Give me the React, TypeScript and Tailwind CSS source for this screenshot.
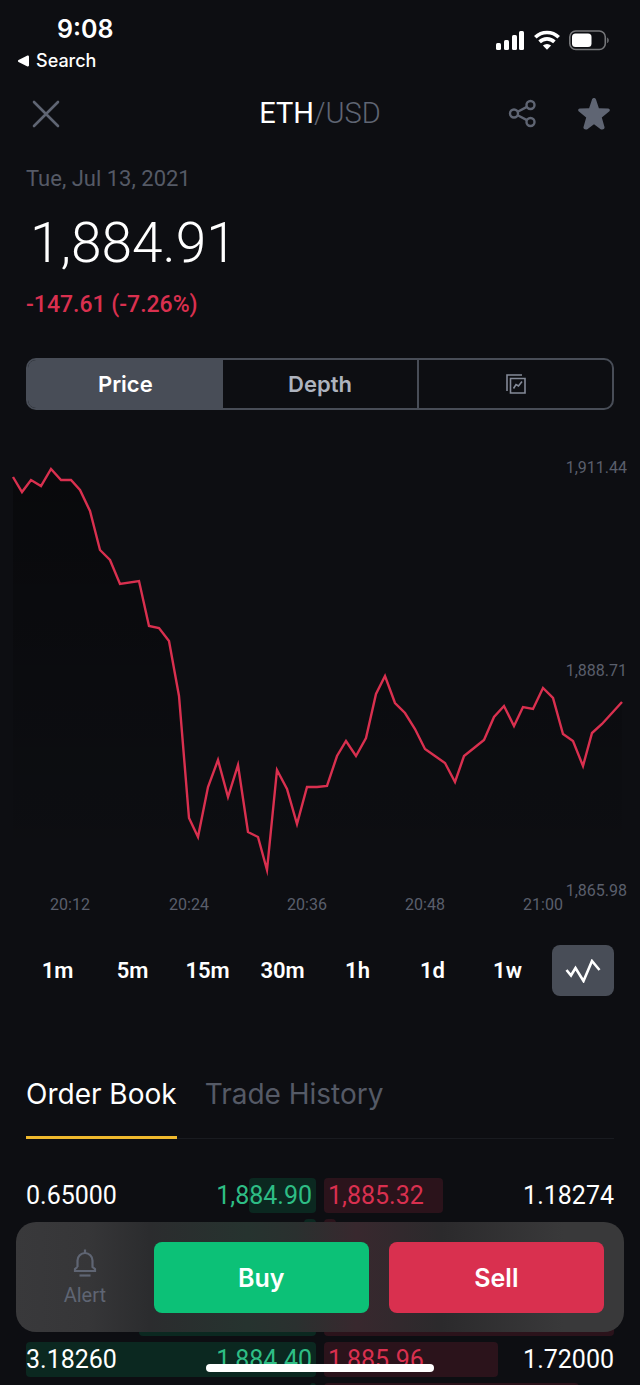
import { clsx } from 'clsx'

const ranges = ['1m', '5m', '15m', '30m', '1h', '1d', '1w']

const times = [
  { x: 70, label: '20:12' },
  { x: 189, label: '20:24' },
  { x: 307, label: '20:36' },
  { x: 425, label: '20:48' },
  { x: 543, label: '21:00' },
]

const prices = [
  { y: 27, label: '1,911.44' },
  { y: 230, label: '1,888.71' },
  { y: 450, label: '1,865.98' },
]

const line =
  '13,37 22,52 31,40 41,46 51,29 61,40 71,40 80,50 90,71 100,110 110,120 120,144 139,141 149,186 159,188 169,201 179,256 189,378 198,397 208,347 218,320 228,357 238,325 248,392 258,397 267,430 277,330 287,349 297,384 307,347 317,347 327,346 337,316 346,301 356,316 366,298 376,254 385,236 395,263 405,273 415,289 425,309 435,316 445,323 455,342 464,316 474,308 484,300 494,277 504,266 514,286 523,267 533,269 543,248 553,258 563,294 573,301 583,326 592,293 602,284 612,273 622,262'

type Row = { bid?: string; bidSize?: string; ask?: string; askSize?: string; bidDepth: number; askDepth: number }

// depth is a percentage of each side of the book
const rows: Row[] = [
  { bidSize: '0.65000', bid: '1,884.90', ask: '1,885.32', askSize: '1.18274', bidDepth: 23, askDepth: 41 },
  { bidDepth: 4, askDepth: 4 },
  { bidDepth: 28, askDepth: 30 },
  { bidDepth: 61, askDepth: 100 },
  { bidSize: '3.18260', bid: '1,884.40', ask: '1,885.96', askSize: '1.72000', bidDepth: 100, askDepth: 60 },
  { bidDepth: 2, askDepth: 88 },
]

function StatusBar() {
  return (
    <div className="flex justify-between pr-[30px] pl-4 font-['Inter',sans-serif] text-white">
      <div className="pt-3">
        <div className="pl-[41px] text-[25px] leading-[34px] font-semibold">9:08</div>
        <a href="#" className="flex items-center gap-1 text-lg leading-[30px] font-medium">
          <svg className="h-3 w-4" viewBox="0 0 16 12" fill="currentColor">
            <path d="M2.5 5.1 11 .7c1-.5 2 0 2 1v8.6c0 1-1 1.5-2 1L2.5 6.9c-.8-.5-.8-1.3 0-1.8Z" />
          </svg>
          Search
        </a>
      </div>
      <div className="flex items-center gap-2 pt-1">
        <svg className="h-5 w-[30px]" viewBox="0 0 30 20" fill="currentColor">
          <rect x="0" y="13" width="5" height="7" rx="1.5" />
          <rect x="8" y="10" width="5" height="10" rx="1.5" />
          <rect x="16" y="5" width="5" height="15" rx="1.5" />
          <rect x="23" y="1" width="5" height="19" rx="1.5" />
        </svg>
        <svg className="h-5 w-[26px]" viewBox="0 0 26 20" fill="none" stroke="currentColor" strokeWidth="3.6">
          <path d="M1.3 7.3a16.6 16.6 0 0 1 23.4 0" />
          <path d="M5.6 11.9a10.5 10.5 0 0 1 14.8 0" />
          <path d="M13 19.8 8.9 15.6a5.9 5.9 0 0 1 8.2 0Z" fill="currentColor" stroke="none" />
        </svg>
        <svg className="h-6 w-[42px]" viewBox="0 0 42 24">
          <rect x="1.8" y="3" width="35.5" height="18.5" rx="6" fill="none" stroke="#76777a" strokeWidth="1.6" />
          <rect x="4" y="5.5" width="19.5" height="13.5" rx="3.5" fill="#fff" />
          <path d="M39.2 9.5c2 .9 2 4.7 0 5.6Z" fill="#76777a" />
        </svg>
      </div>
    </div>
  )
}

function Header() {
  return (
    <header className="grid h-[75px] grid-cols-[1fr_auto_1fr] items-center px-[26px] text-[#5f6573]">
      <button aria-label="Close" className="justify-self-start p-1.5">
        <svg className="size-7" viewBox="0 0 28 28" fill="none" stroke="currentColor" strokeWidth="2.6" strokeLinecap="round">
          <path d="M2 2 26 26M26 2 2 26" />
        </svg>
      </button>
      <h1 className="text-[29px] font-light">
        <span className="font-normal text-white">ETH</span>/USD
      </h1>
      <div className="flex items-center gap-9 justify-self-end">
        <button aria-label="Share">
          <svg className="size-[30px]" viewBox="0 0 30 30" fill="none" stroke="currentColor" strokeWidth="2.4">
            <circle cx="6" cy="14.5" r="4" />
            <circle cx="22.5" cy="6" r="4" />
            <circle cx="22.5" cy="23" r="4" />
            <path d="m9.7 12.7 9.2-4.8M9.7 16.3l9.2 4.8" />
          </svg>
        </button>
        <button aria-label="Favourite" className="w-10">
          <svg className="mx-auto size-8" viewBox="0 0 32 32" fill="currentColor">
            <path d="M14 1.5c.5-2 3.500-2 4 0l2.900 8.700 9.300.3c1.600.1 2.200 2 .9 3l-7.300 5.900 2.700 9.600c.4 1.500-.8 2.500-2.300 2.500h-1.200L16 26.300 9 31.500H7.800c-1.500 0-2.700-1-2.300-2.500l2.700-9.600L.9 13.500c-1.300-1-.7-2.900.9-3l9.300-.3Z" />
          </svg>
        </button>
      </div>
    </header>
  )
}

function Chart() {
  return (
    <svg className="block w-full" viewBox="0 0 640 480" role="img" aria-label="ETH/USD price">
      <defs>
        <linearGradient id="shade" x1="0" y1="0" x2="0" y2="1">
          <stop offset="0" stopColor="#000" stopOpacity="0.35" />
          <stop offset="1" stopColor="#000" stopOpacity="0" />
        </linearGradient>
      </defs>
      <polygon points={`13,425 ${line} 622,425`} fill="url(#shade)" />
      <polyline points={line} fill="none" stroke="#d9304f" strokeWidth="2.4" strokeMiterlimit="10" />
      <g fill="#5a5f6c" fontSize="16" dominantBaseline="central">
        {prices.map((p) => (
          <text key={p.label} x="627" y={p.y} textAnchor="end">
            {p.label}
          </text>
        ))}
        {times.map((t) => (
          <text key={t.label} x={t.x} y="464" textAnchor="middle">
            {t.label}
          </text>
        ))}
      </g>
    </svg>
  )
}

function BookRow({ row }: { row: Row }) {
  return (
    <tr className="grid h-[41px] grid-cols-2 gap-2 text-[25px] leading-[35px]">
      <td className="relative h-[35px]">
        <div className="absolute inset-y-0 right-0 rounded bg-[#0b2820]" style={{ width: `${row.bidDepth}%` }} />
        <div className="relative flex justify-between pr-1">
          <span className="text-white">{row.bidSize}</span>
          <span className="text-[#2ebd85]">{row.bid}</span>
        </div>
      </td>
      <td className="relative h-[35px]">
        <div className="absolute inset-y-0 left-0 rounded bg-[#2b131b]" style={{ width: `${row.askDepth}%` }} />
        <div className="relative flex justify-between pl-1">
          <span className="text-[#d9304f]">{row.ask}</span>
          <span className="text-white">{row.askSize}</span>
        </div>
      </td>
    </tr>
  )
}

function ActionBar() {
  return (
    <div className="fixed inset-x-4 bottom-[53px] flex h-[110px] items-center gap-5 rounded-[20px] bg-[linear-gradient(to_right,#39393b_0%,#363638_12%,#2b2c2e_22%,#26332f_38%,#2a302f_46%,#38282e_56%,#2b2a2c_70%,#39393a_90%)] pr-5">
      <button className="-mr-5 flex flex-1 flex-col items-center pt-1 text-[#5f6573]">
        <svg className="mb-1 h-7 w-6" viewBox="0 0 24 28" fill="none" stroke="currentColor" strokeWidth="2.2">
          <path d="M12 .5v3.500M4.500 18v-6.500a7.500 7.500 0 0 1 15 0V18l2.500 2v2H2v-2l2.500-2" />
          <path d="M6.500 26.500h11" />
        </svg>
        <span className="text-xl leading-7">Alert</span>
      </button>
      <button className="h-[71px] w-[36.6%] rounded-lg bg-[#0cc177] pt-1 font-['Inter',sans-serif] text-[25px] font-semibold text-white">
        Buy
      </button>
      <button className="h-[71px] w-[36.6%] rounded-lg bg-[#d9304f] pt-1 font-['Inter',sans-serif] text-[25px] font-semibold text-white">
        Sell
      </button>
    </div>
  )
}

export default function App() {
  return (
    <div className="h-screen overflow-hidden bg-[#0d0e12] font-['Roboto',sans-serif]">
      <StatusBar />
      <Header />

      <section className="px-[26px] pt-3.5">
        <p className="text-[22px] leading-7 text-[#555a66]">Tue, Jul 13, 2021</p>
        <p className="pt-3.5 pl-1 text-[55px] leading-[72px] font-light text-white">1,884.91</p>
        <p className="pt-3 text-[23px] leading-7 font-medium text-[#d9304f]">-147.61 (-7.26%)</p>
      </section>

      <div className="mx-[26px] mt-[39px] grid h-[52px] grid-cols-3 overflow-hidden rounded-[10px] border-2 border-[#484d57] font-['Inter',sans-serif] text-[22px] font-semibold">
        <button className="bg-[#484d57] text-white">Price</button>
        <button className="text-[#aeb3be]">Depth</button>
        <button aria-label="Chart" className="flex items-center justify-center border-l-2 border-[#484d57] text-[#848a98]">
          <svg className="size-5" viewBox="0 0 20 20" fill="none" stroke="currentColor" strokeWidth="1.6">
            <path d="M16 1H1v16" />
            <path d="M4.5 4.5H19V19H4.5Z" />
            <path d="m7.5 14.5 2.500-4 2.500 1.500 3.500-4.500" />
          </svg>
        </button>
      </div>

      <div className="pt-[30px]">
        <Chart />
      </div>

      <div className="mt-[25px] grid grid-cols-8 px-5 text-[22px] font-semibold text-white">
        {ranges.map((r) => (
          <button key={r}>{r}</button>
        ))}
        <button
          aria-label="Line chart"
          className="flex h-[51px] w-[62px] items-center justify-center justify-self-center rounded-lg bg-[#484d57]"
        >
          <svg className="h-6 w-9" viewBox="0 0 36 24" fill="none" stroke="currentColor" strokeWidth="2.6">
            <path d="m1.5 11 4.500 5.500L10.500 9l8 13L27 2l7.500 9" />
          </svg>
        </button>
      </div>

      <div className="mx-[26px] mt-[68px] flex gap-7 border-b border-[#191b20] font-['Inter',sans-serif] text-[28px] leading-9">
        {['Order Book', 'Trade History'].map((tab, i) => (
          <button
            key={tab}
            className={clsx(
              '-mb-px border-b-3 pt-3 pb-6',
              i === 0 ? 'border-[#f0b92d] text-white' : 'border-transparent text-[#555a66]',
            )}
          >
            {tab}
          </button>
        ))}
      </div>

      <table className="mx-[26px] mt-[39px] block">
        <tbody className="block">
          {rows.map((row, i) => (
            <BookRow key={i} row={row} />
          ))}
        </tbody>
      </table>

      <ActionBar />
      <div className="fixed bottom-[13px] left-1/2 h-2 w-[228px] -translate-x-1/2 rounded-full bg-white" />
    </div>
  )
}
